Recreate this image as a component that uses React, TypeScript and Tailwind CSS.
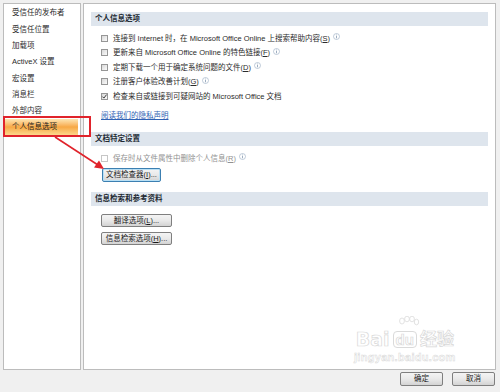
import { ReactNode } from "react";

const navItems = [
  "受信任的发布者",
  "受信任位置",
  "加载项",
  "ActiveX 设置",
  "宏设置",
  "消息栏",
  "外部内容",
  "个人信息选项",
];

type Opt = { pre: string; key: string; post?: string; checked?: boolean; info?: boolean };

const privacyOptions: Opt[] = [
  { pre: "连接到 Internet 时，在 Microsoft Office Online 上搜索帮助内容(", key: "S", post: ")", info: true },
  { pre: "更新来自 Microsoft Office Online 的特色链接(", key: "F", post: ")", info: true },
  { pre: "定期下载一个用于确定系统问题的文件(", key: "D", post: ")", info: true },
  { pre: "注册客户体验改善计划(", key: "G", post: ")", info: true },
  { pre: "检查来自或链接到可疑网站的 Microsoft Office 文档", key: "", checked: true },
];

const Info = () => (
  <svg width="7" height="7" viewBox="0 0 7 7" className="ml-[3px] -mt-[3px] shrink-0">
    <circle cx="3.5" cy="3.5" r="3" fill="#fff" stroke="#a5b6c8" strokeWidth="0.7" />
    <rect x="3.1" y="3" width="0.8" height="2.3" fill="#8599b0" />
    <rect x="3.1" y="1.6" width="0.8" height="0.8" fill="#8599b0" />
  </svg>
);

const Checkbox = ({ checked, disabled }: { checked?: boolean; disabled?: boolean }) => (
  <span
    className={`relative w-[7px] h-[7px] shrink-0 border ${
      disabled ? "border-[#c6c6c6] bg-white" : "border-[#969696] bg-linear-to-br from-[#d8d8d8] to-[#fbfbfb]"
    }`}
  >
    {checked && (
      <svg width="7" height="7" viewBox="0 0 7 7" className="absolute -left-px -top-px">
        <path d="M1.4 3.6 L2.9 5.1 L5.6 1.6" fill="none" stroke="#3a3a3a" strokeWidth="1" />
      </svg>
    )}
  </span>
);

const SectionHeader = ({ children, className = "" }: { children: ReactNode; className?: string }) => (
  <div className={`h-[14px] bg-[#dee5ed] pl-[4px] flex items-center font-bold text-[#222a33] ${className}`}>
    {children}
  </div>
);

const Button = ({
  children,
  className = "",
  focused,
}: {
  children: ReactNode;
  className?: string;
  focused?: boolean;
}) => (
  <button
    className={`flex items-center justify-center rounded-[2px] border text-[#1a1a1a] bg-linear-to-b from-[#f4f4f4] via-[#e9e9e9] to-[#d3d3d3] ${
      focused ? "border-[#3c7fb1] shadow-[inset_0_0_0_1px_#b9e0f5]" : "border-[#7f7f7f]"
    } ${className}`}
  >
    {children}
  </button>
);

const Mn = ({ k }: { k: string }) => <span className="underline">{k}</span>;

export default function App() {
  return (
    <div
      className="relative w-[500px] h-[392px] overflow-hidden bg-[#f0f0f0] text-[7.5px] leading-none text-[#2b2b2b]"
      style={{ fontFamily: '"Liberation Sans", "Noto Sans CJK SC", sans-serif' }}
    >
      <div className="flex gap-[2px] pt-[3px] pl-[3px] h-[370px]">
        {/* left nav */}
        <div className="w-[78px] h-[367px] bg-white border border-[#bcbcbc] pt-[1px]">
          {navItems.map((item, i) =>
            i === navItems.length - 1 ? (
              <div
                key={item}
                className="h-[16.3px] ml-[1px] mr-[2px] flex items-center pl-[7px] text-[#1a1a1a] bg-linear-to-b from-[#fde6b2] via-[#f7a844] to-[#fcd88a]"
              >
                {item}
              </div>
            ) : (
              <div key={item} className="h-[16.3px] flex items-center pl-[8px]">
                {item}
              </div>
            ),
          )}
        </div>

        {/* right content */}
        <div className="w-[413px] h-[367px] bg-white border border-[#bcbcbc] px-[7px] pt-[8px]">
          <SectionHeader>个人信息选项</SectionHeader>
          <div className="mt-[5px] pl-[10px]">
            {privacyOptions.map((o) => (
              <div key={o.pre} className="h-[14.5px] flex items-center">
                <Checkbox checked={o.checked} />
                <span className="ml-[5px] whitespace-nowrap">
                  {o.pre}
                  {o.key && <Mn k={o.key} />}
                  {o.post}
                </span>
                {o.info && <Info />}
              </div>
            ))}
          </div>
          <div className="mt-[7px] pl-[10px] h-[11px] flex items-center">
            <span className="text-[#3062b4] underline">阅读我们的隐私声明</span>
          </div>

          <SectionHeader className="mt-[10.5px]">文档特定设置</SectionHeader>
          <div className="mt-[5px] pl-[10px] h-[14.5px] flex items-center">
            <Checkbox disabled />
            <span className="ml-[5px] text-[#919191]">
              保存时从文件属性中删除个人信息(<Mn k="R" />)
            </span>
            <Info />
          </div>
          <div className="mt-[2.5px] pl-[11px]">
            <Button focused className="w-[59px] h-[14px]">
              文档检查器(<Mn k="I" />)...
            </Button>
          </div>

          <SectionHeader className="mt-[10px]">信息检索和参考资料</SectionHeader>
          <div className="mt-[8px] pl-[10px] flex flex-col gap-[5px]">
            <Button className="w-[71px] h-[13px]">
              翻译选项(<Mn k="L" />)...
            </Button>
            <Button className="w-[71px] h-[13px]">
              信息检索选项(<Mn k="H" />)...
            </Button>
          </div>
        </div>
      </div>

      {/* dialog buttons */}
      <div className="flex justify-end gap-[9px] pr-[5px] pt-[2px]">
        <Button className="w-[43px] h-[14px]">确定</Button>
        <Button className="w-[43px] h-[14px]">取消</Button>
      </div>

      {/* annotation: red highlight + arrow */}
      <div className="absolute left-[3px] top-[116px] w-[88px] h-[21px] border-2 border-[#e0232b]" />
      <svg className="absolute left-0 top-0 pointer-events-none" width="500" height="392">
        <line x1="55" y1="137" x2="98" y2="165" stroke="#e0232b" strokeWidth="1.6" />
        <path d="M104 169 L94 167.5 L99 160.5 Z" fill="#e0232b" />
      </svg>

      {/* watermark */}
      <div className="absolute left-[354px] top-[316px] flex flex-col items-center text-white pointer-events-none">
        <svg width="26" height="14" viewBox="0 0 26 14" className="ml-[6px]">
          <g fill="#fff" stroke="#dadada" strokeWidth="0.8">
            <ellipse cx="7" cy="5" rx="2.4" ry="3" />
            <ellipse cx="12" cy="3" rx="2.4" ry="2.8" />
            <ellipse cx="17" cy="3" rx="2.4" ry="2.8" />
            <ellipse cx="21.5" cy="6" rx="2.2" ry="2.8" />
          </g>
        </svg>
        <div className="flex items-center gap-[3px] text-[19px] font-bold leading-none [-webkit-text-stroke:0.7px_#d8d8d8]">
          <span style={{ fontFamily: '"DejaVu Sans", sans-serif' }}>Bai</span>
          <span className="rounded-[4px] border border-[#dadada] px-[2px] text-[15px]">du</span>
          <span className="text-[17px]">经验</span>
        </div>
        <div className="mt-[3px] text-[11px] font-bold tracking-[0.3px] [-webkit-text-stroke:0.5px_#d8d8d8]">
          jingyan.baidu.com
        </div>
      </div>
    </div>
  );
}
